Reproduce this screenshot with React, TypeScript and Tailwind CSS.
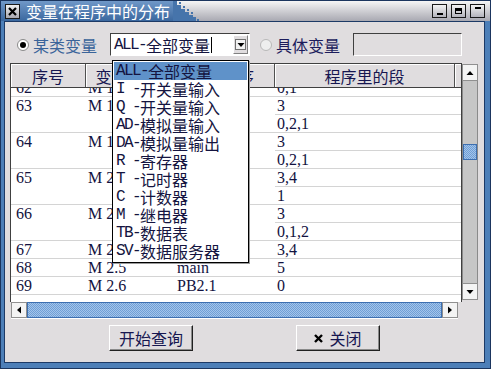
import React from 'react';

const LAT = "font-['Liberation_Mono',monospace] tracking-[-1.6px] whitespace-pre";
const SERIF = "font-['Liberation_Serif',serif] whitespace-pre";

function Tri({ dir }: { dir: 'up' | 'down' | 'left' | 'right' }) {
  const pts = {
    up: '0.5,6 7.5,6 4,2',
    down: '0.5,2 7.5,2 4,6',
    left: '6,0.5 6,7.5 2,4',
    right: '2,0.5 2,7.5 6,4',
  }[dir];
  return (
    <svg width="8" height="8" viewBox="0 0 8 8">
      <polygon points={pts} fill="#000" />
    </svg>
  );
}

const items: [string, string][] = [
  ['ALL-', '全部变量'],
  ['I -', '开关量输入'],
  ['Q -', '开关量输入'],
  ['AD-', '模拟量输入'],
  ['DA-', '模拟量输出'],
  ['R -', '寄存器'],
  ['T -', '记时器'],
  ['C -', '计数器'],
  ['M -', '继电器'],
  ['TB-', '数据表'],
  ['SV-', '数据服务器'],
];

// 被下拉列表挡住的部分留空
const groups = [
  { no: '62', addr: 'M 1', prog: '', segs: ['0,1'] },
  { no: '63', addr: 'M 1', prog: '', segs: ['3', '0,2,1'] },
  { no: '64', addr: 'M 1', prog: '', segs: ['3', '0,2,1'] },
  { no: '65', addr: 'M 2', prog: '', segs: ['3,4', '1'] },
  { no: '66', addr: 'M 2', prog: '', segs: ['3', '0,1,2'] },
  { no: '67', addr: 'M 2', prog: '', segs: ['3,4'] },
  { no: '68', addr: 'M 2.5', prog: 'main', segs: ['5'] },
  { no: '69', addr: 'M 2.6', prog: 'PB2.1', segs: ['0'] },
];

const DITHER =
  'bg-[repeating-conic-gradient(#6f9fd6_0%_25%,#a4c4ea_0%_50%)] bg-[length:2px_2px]';

export default function App() {
  return (
    <div className="relative w-[491px] h-[369px] overflow-hidden bg-[#4d7fb8] border border-[#1b355e] flex flex-col font-['Noto_Sans_CJK_SC',sans-serif] text-[16px] leading-[18px] text-[#161650]">
      {/* 标题栏 */}
      <div className="h-[20px] flex shrink-0">
        <div className="w-[172px] flex items-center bg-gradient-to-b from-[#7098c8] to-[#3b689f]">
          <div className="ml-[4px] w-[15px] h-[15px] border border-[#1a1a1a] bg-gradient-to-b from-[#f0f0f0] to-[#a8a8b0] flex items-center justify-center">
            <svg width="9" height="9" viewBox="0 0 9 9">
              <path d="M1 1L8 8M8 1L1 8" stroke="#000" strokeWidth="2.2" />
            </svg>
          </div>
          <span className="ml-[6px] text-white leading-[16px] whitespace-nowrap">变量在程序中的分布</span>
        </div>
        <div className="w-[28px] bg-gradient-to-b from-[#f6f6f6] to-[#a9a9b2]">
          <svg width="28" height="20" viewBox="0 0 28 20">
            <g fill="#4674ab">
              <rect x="0" y="0" width="4" height="20" />
              <rect x="4" y="4" width="4" height="16" />
              <rect x="8" y="8" width="4" height="12" />
              <rect x="12" y="11" width="4" height="9" />
              <rect x="16" y="14" width="4" height="6" />
              <rect x="20" y="16" width="3" height="4" />
              <rect x="24" y="18" width="2" height="2" />
              <rect x="6" y="1" width="2" height="2" />
              <rect x="10" y="5" width="2" height="2" />
              <rect x="14" y="8" width="2" height="2" />
              <rect x="18" y="11" width="2" height="2" />
            </g>
          </svg>
        </div>
        <div className="flex-1 flex items-center justify-end gap-[4px] pr-[5px] bg-gradient-to-b from-[#f6f6f6] to-[#a9a9b2]">
          <div className="w-[15px] h-[14px] border border-[#1a1a1a] bg-gradient-to-b from-[#f4f4f4] to-[#b4b4bc] flex items-end justify-center pb-[2px]">
            <div className="w-[6px] h-[2px] bg-black" />
          </div>
          <div className="w-[15px] h-[14px] border border-[#1a1a1a] bg-gradient-to-b from-[#f4f4f4] to-[#b4b4bc] flex items-center justify-center">
            <div className="w-[7px] h-[6px] border border-black border-t-[3px]" />
          </div>
          <div className="w-[15px] h-[14px] border border-[#1a1a1a] bg-gradient-to-b from-[#f4f4f4] to-[#b4b4bc] flex items-start justify-center pt-[2px]">
            <div className="w-[6px] h-[2px] bg-black" />
          </div>
        </div>
      </div>

      {/* 主体 */}
      <div className="flex-1 ml-[3px] mr-[5px] mb-[5px] border border-[#1d3a66] bg-[#e0dddf] flex flex-col">
        {/* 选择行 */}
        <div className="mt-[11px] h-[23px] flex items-center pl-[12px]">
          <div className="w-[12px] h-[12px] rounded-full border border-[#8a8a8a] bg-white flex items-center justify-center">
            <div className="w-[6px] h-[6px] rounded-full bg-black" />
          </div>
          <span className="ml-[4px] text-[#3a649a]">某类变量</span>
          <div className="ml-[13px] w-[140px] h-[23px] border border-t-[#404040] border-l-[#404040] border-b-white border-r-white bg-white flex items-center">
            <span className="pl-[3px] flex items-center text-[#141440]">
              <span className={LAT}>ALL-</span>全部变量
              <span className="ml-[1px] w-[1px] h-[16px] bg-black" />
            </span>
            <div className="ml-auto mr-[1px] w-[15px] h-[19px] bg-[#e0dddf] border border-t-white border-l-white border-b-[#808080] border-r-[#808080] flex items-center justify-center">
              <div className="w-[11px] h-[11px] border border-[#707070] bg-[#f2f2f2] flex items-center justify-center">
                <Tri dir="down" />
              </div>
            </div>
          </div>
          <div className="ml-[10px] w-[12px] h-[12px] rounded-full border border-[#b8b8b8] bg-[#eeeeee]" />
          <span className="ml-[4px] text-[#1c1c5c]">具体变量</span>
          <div className="ml-[13px] w-[109px] h-[23px] border border-t-[#404040] border-l-[#404040] border-b-white border-r-white bg-[#e0dddf]" />
        </div>

        {/* 表格 */}
        <div className="mt-[7px] ml-[5px] w-[469px] flex flex-col">
          <div className="h-[239px] flex">
            <div className="w-[452px] border-l border-t border-r border-[#404040] bg-white flex flex-col overflow-hidden">
              <div className="h-[24px] shrink-0 flex border-b border-[#404040] bg-[#e0dddf]">
                {[
                  ['序号', 'w-[75px]'],
                  ['变量地址', 'w-[84px]'],
                  ['所在程序', 'w-[105px]'],
                  ['程序里的段', 'w-[180px]'],
                ].map(([t, w]) => (
                  <div
                    key={t}
                    className={`${w} h-full flex items-center justify-center border-r border-[#505050] shadow-[inset_1px_1px_0_#ffffff] text-[#161650]`}
                  >
                    {t}
                  </div>
                ))}
                <div className="flex-1 shadow-[inset_1px_1px_0_#ffffff]" />
              </div>
              <div className="flex-1 overflow-hidden">
                <div className={`-mt-[9px] ${SERIF} text-[#121240]`}>
                  {groups.map((g) => (
                    <div key={g.no} className="flex border-b border-[#d4d4d4] leading-[17px]">
                      <div className="w-[75px] pl-[5px]">{g.no}</div>
                      <div className="w-[84px] pl-[2px]">{g.addr}</div>
                      <div className="w-[105px] pl-[7px]">{g.prog}</div>
                      <div className="flex-1 flex flex-col">
                        {g.segs.map((s, i) => (
                          <div
                            key={i}
                            className={`pl-[2px] ${i < g.segs.length - 1 ? 'h-[18px] border-b border-[#d4d4d4]' : 'h-[17px]'}`}
                          >
                            {s}
                          </div>
                        ))}
                      </div>
                    </div>
                  ))}
                </div>
              </div>
            </div>
            {/* 竖滚动条 */}
            <div className="w-[16px] h-full flex flex-col pt-[1px] pb-[2px]">
              <div className="h-[17px] border border-[#909090] bg-[#f4f4f4] flex items-center justify-center">
                <Tri dir="up" />
              </div>
              <div className="flex-1 bg-[#c6c6c6] border-x border-[#8a8a8a] flex flex-col">
                <div className="h-[63px]" />
                <div className={`h-[16px] border border-[#3d6fb0] ${DITHER}`} />
              </div>
              <div className="h-[17px] border border-[#909090] bg-[#f4f4f4] flex items-center justify-center">
                <Tri dir="down" />
              </div>
            </div>
          </div>
          {/* 横滚动条 */}
          <div className="h-[17px] ml-[1px] w-[447px] flex border-b border-white">
            <div className="w-[16px] border border-[#909090] bg-[#f4f4f4] flex items-center justify-center">
              <Tri dir="left" />
            </div>
            <div className={`flex-1 border border-[#3d6fb0] ${DITHER}`} />
            <div className="w-[16px] border border-[#909090] bg-[#f4f4f4] flex items-center justify-center">
              <Tri dir="right" />
            </div>
          </div>
        </div>

        {/* 按钮 */}
        <div className="mt-[6px] ml-[104px] flex gap-[103px]">
          <button className="w-[84px] h-[26px] bg-[#e0dddf] border border-t-white border-l-white border-r-[#202020] border-b-[#202020] shadow-[inset_-1px_-1px_0_#8a8a8a] flex items-center justify-center text-[#161650]">
            开始查询
          </button>
          <button className="w-[84px] h-[26px] bg-[#e0dddf] border border-t-white border-l-white border-r-[#202020] border-b-[#202020] shadow-[inset_-1px_-1px_0_#8a8a8a] flex items-center justify-center gap-[6px] text-[#161650]">
            <svg width="9" height="9" viewBox="0 0 9 9">
              <path d="M1 1L8 8M8 1L1 8" stroke="#000" strokeWidth="2.4" />
            </svg>
            关闭
          </button>
        </div>
      </div>

      {/* 下拉列表 */}
      <div className="absolute left-[111px] top-[59px] w-[137px] h-[203px] bg-white border border-black shadow-[1px_1px_0_#9a9a9a] pt-[1px] px-[1px] text-[#141440]">
        {items.map(([a, b], i) => (
          <div
            key={a + b}
            className={`h-[18px] flex items-center pl-[2px] whitespace-nowrap ${i === 0 ? 'bg-[#5f92c9]' : ''}`}
          >
            <span className={LAT}>{a}</span>
            {b}
          </div>
        ))}
      </div>
    </div>
  );
}
